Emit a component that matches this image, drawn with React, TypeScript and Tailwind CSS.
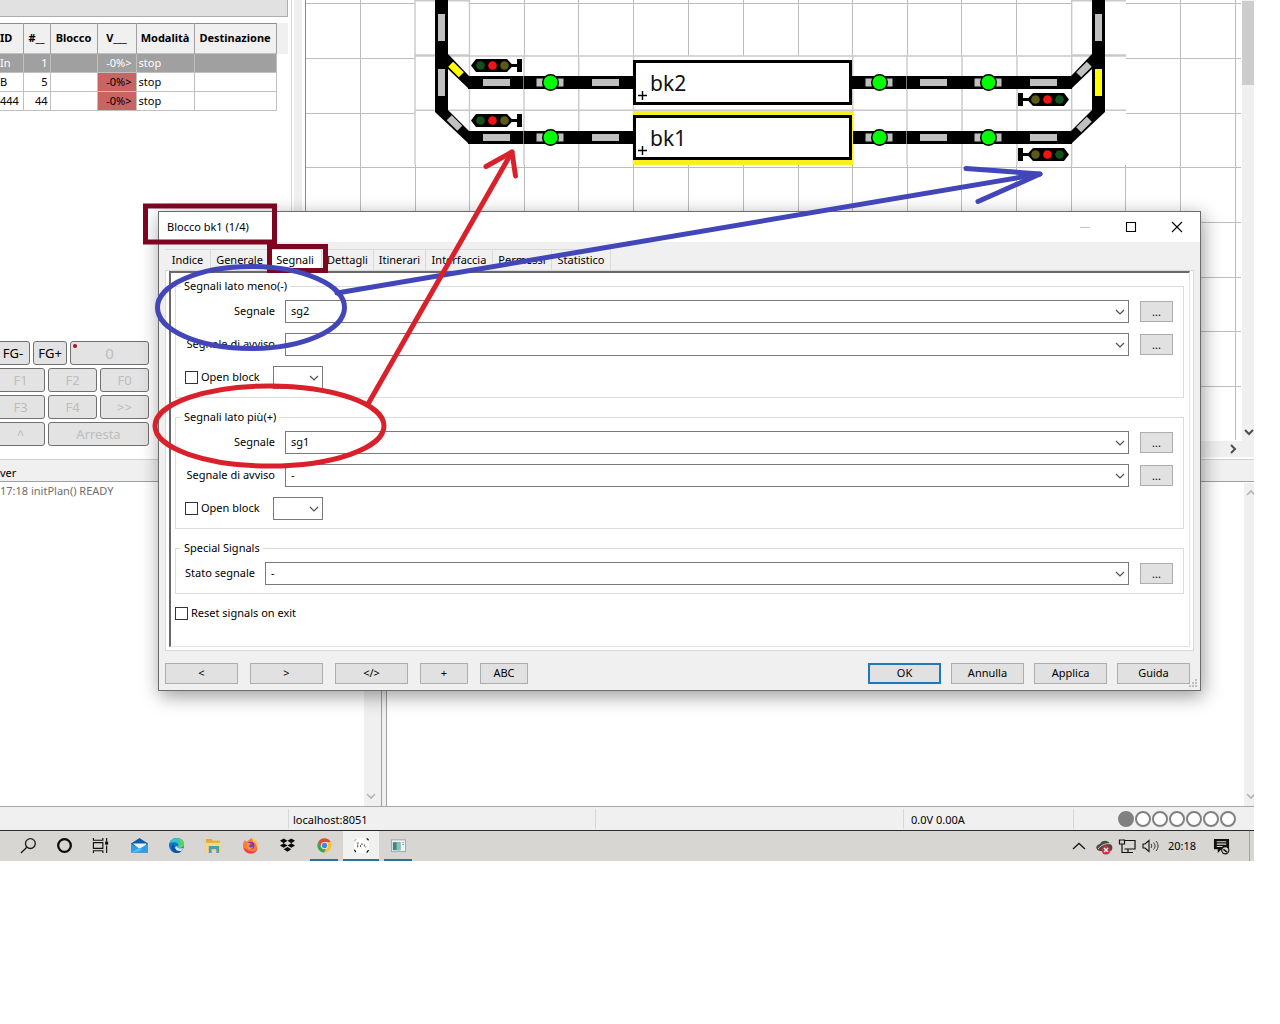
import React from "react";

/* ---------- track plan ---------- */

const GREY = "#c0c0c0";
const GRID_X = [360, 415, 469, 524, 578, 633, 688, 743, 798, 852, 907, 961, 1016, 1071, 1125, 1180, 1235];
const GRID_Y = [3, 58, 113, 167, 222, 277, 331, 386];

function Bar({ x, y, w = 27, h = 7, fill = GREY }: { x: number; y: number; w?: number; h?: number; fill?: string }) {
  return <rect x={x} y={y} width={w} height={h} fill={fill} />;
}

function Sensor({ x, y }: { x: number; y: number }) {
  return (
    <g>
      <rect x={x - 14} y={y - 4} width="27" height="8" fill={GREY} />
      <circle cx={x} cy={y} r="8.5" fill="#000" />
      <circle cx={x} cy={y} r="7" fill="#00ff00" />
    </g>
  );
}

function Signal({ x, y, flip = false }: { x: number; y: number; flip?: boolean }) {
  return (
    <g transform={`translate(${x} ${y})${flip ? " scale(-1 1)" : ""}`}>
      <polygon points="0,6.5 5,0 36,0 42,6.5 36,13 5,13" fill="#000" />
      <rect x="40" y="5" width="8" height="3" fill="#000" />
      <rect x="46" y="0" width="5" height="13" fill="#000" />
      <circle cx="9.5" cy="6.5" r="4.3" fill="#14501a" />
      <circle cx="21.5" cy="6.5" r="4.3" fill="#f01414" />
      <circle cx="33.5" cy="6.5" r="4.3" fill="#5c5a18" />
    </g>
  );
}

function Block({ y, name }: { y: number; name: string }) {
  return (
    <g>
      <rect x="634.5" y={y + 1.5} width="216" height="42" fill="#fff" stroke="#000" strokeWidth="3" />
      <path d={`M638 ${y + 35.5}h9M642.5 ${y + 31}v9`} stroke="#000" strokeWidth="1.4" />
      <text x="650" y={y + 31} fontSize="21" fill="#111">
        {name}
      </text>
    </g>
  );
}

function TrackPlan() {
  return (
    <svg viewBox="306 0 935 440" width="935" height="440" className="block shrink-0" role="img" aria-label="Piano dei binari">
      <rect x="306" y="0" width="935" height="440" fill="#fff" />
      <g stroke="#bdbdbd" strokeWidth="1">
        {GRID_X.map((x) => (
          <path key={x} d={`M${x + 0.5} 0V440`} />
        ))}
        {GRID_Y.map((y) => (
          <path key={y} d={`M306 ${y + 0.5}H1241`} />
        ))}
      </g>
      {/* occupied tiles */}
      <g fill="#fff">
        <rect x="415" y="1" width="54" height="54" />
        <rect x="415" y="56" width="711" height="109" />
        <rect x="1072" y="1" width="54" height="164" />
      </g>
      <g stroke="#c9c9c9" strokeWidth="1.4">
        <path d="M415 .7H470M415 55H470M415 56H1126M415 110.2H1126M1072 .7H1126M1072 55H1126" />
        {[415, 469.5, 524, 578.7, 633.5, 852.7, 907, 962, 1017, 1071.7].map((x) => (
          <path key={x} d={`M${x} 56V165`} />
        ))}
        <path d="M415 0V56M469.5 0V56M1071.7 0V56" />
      </g>
      <g fill="#000">
        <rect x="435" y="0" width="13" height="112" />
        <rect x="1092" y="0" width="13" height="112" />
        <rect x="468" y="76" width="166" height="13" />
        <rect x="468" y="131" width="166" height="13" />
        <rect x="852" y="76" width="220" height="13" />
        <rect x="852" y="131" width="220" height="13" />
        <polygon points="448,54 469,76 469,89 448,69" />
        <polygon points="435,110 448,110 469,131 469,144 435,112" />
        <polygon points="1092,54 1071,76 1071,89 1092,69" />
        <polygon points="1105,110 1092,110 1071,131 1071,144 1105,112" />
      </g>
      <g fill={GREY}>
        <rect x="438" y="14" width="7" height="27" />
        <rect x="438" y="69" width="7" height="27" />
        <rect x="1095" y="14" width="7" height="27" />
        <rect x="1095" y="69" width="7" height="27" fill="#ffff00" />
        <rect x="-7.5" y="-3.5" width="15" height="7" fill="#ffff00" transform="translate(456 69.5) rotate(45)" />
        <rect x="-7.5" y="-3.5" width="15" height="7" transform="translate(454.5 123) rotate(45)" />
        <rect x="-7.5" y="-3.5" width="15" height="7" transform="translate(1084 69.5) rotate(-45)" />
        <rect x="-7.5" y="-3.5" width="15" height="7" transform="translate(1084 124.5) rotate(-45)" />
      </g>
      {[79, 134].map((y) => (
        <g key={y}>
          <Bar x={483} y={y} />
          <Bar x={592} y={y} />
          <Bar x={920} y={y} />
          <Bar x={1030} y={y} />
          <Sensor x={550.5} y={y + 3.5} />
          <Sensor x={879.5} y={y + 3.5} />
          <Sensor x={988.5} y={y + 3.5} />
          <path d={`M523.5 ${y - 3}v13M906.5 ${y - 3}v13`} stroke="#777" strokeWidth="1" />
        </g>
      ))}
      <rect x="633" y="111" width="220" height="54" fill="#f8f020" />
      <Block y={60} name="bk2" />
      <Block y={115} name="bk1" />
      <Signal x={471} y={59} />
      <Signal x={471} y={114} />
      <Signal x={1069} y={93} flip />
      <Signal x={1069} y={148} flip />
    </svg>
  );
}

/* ---------- main window ---------- */

const LOCOS = [
  { id: "In", n: "1", selected: true },
  { id: "B", n: "5", selected: false },
  { id: "444", n: "44", selected: false },
];

function LocoTable() {
  const th = "h-[30px] border-r border-[#a0a0a0] p-0 font-bold whitespace-nowrap";
  return (
    <div className="mt-[6px] flex">
      <table className="w-[276px] table-fixed border-collapse border-t border-[#8c8c8c] text-[11px]">
        <colgroup>
          <col className="w-[23px]" />
          <col className="w-[27px]" />
          <col className="w-[47px]" />
          <col className="w-[39px]" />
          <col className="w-[58px]" />
          <col className="w-[82px]" />
        </colgroup>
        <thead className="bg-[#f0f0f0]">
          <tr>
            <th className={th + " text-left"}>ID</th>
            <th className={th}>#__</th>
            <th className={th}>Blocco</th>
            <th className={th}>V___</th>
            <th className={th}>Modalità</th>
            <th className={th}>Destinazione</th>
          </tr>
        </thead>
        <tbody>
          {LOCOS.map((l) => {
            const td = "h-[19px] border border-l-0 border-[#c0c0c0] p-0 leading-[18px]";
            return (
              <tr key={l.id} className={l.selected ? "bg-[#a0a0a0] text-white" : "bg-white text-black"}>
                <td className={td}>{l.id}</td>
                <td className={td + " pr-[2px] text-right"}>{l.n}</td>
                <td className={td}></td>
                <td className={td + " pr-1 text-right " + (l.selected ? "" : "bg-[#c86464]")}>-0%&gt;</td>
                <td className={td + " pl-[2px]"}>stop</td>
                <td className={td}></td>
              </tr>
            );
          })}
        </tbody>
      </table>
      <div className="h-[31px] flex-1 bg-[#f0f0f0]" />
    </div>
  );
}

function PadKey({ children, className, enabled = false }: { children: React.ReactNode; className: string; enabled?: boolean }) {
  return (
    <button
      disabled={!enabled}
      className={
        "flex h-6 items-center justify-center rounded-[3px] border border-[#707070] bg-[#e3e3e3] text-[13px] leading-none " +
        (enabled ? "text-black " : "text-[#bdbdbd] ") +
        className
      }
    >
      {children}
    </button>
  );
}

function Keypad() {
  return (
    <div className="-ml-1 flex w-[153px] flex-col gap-[3px] pt-[230px]">
      <div className="flex gap-[3px]">
        <PadKey enabled className="w-[34px]">FG-</PadKey>
        <PadKey enabled className="w-[34px]">FG+</PadKey>
        <PadKey className="relative flex-1 text-[15px]">
          <span className="absolute top-[2px] left-[2px] size-1 rounded-full bg-[#b01020]" />0
        </PadKey>
      </div>
      <div className="flex gap-[3px]">
        <PadKey className="flex-1">F1</PadKey>
        <PadKey className="flex-1">F2</PadKey>
        <PadKey className="flex-1">F0</PadKey>
      </div>
      <div className="flex gap-[3px]">
        <PadKey className="flex-1">F3</PadKey>
        <PadKey className="flex-1">F4</PadKey>
        <PadKey className="flex-1">&gt;&gt;</PadKey>
      </div>
      <div className="flex gap-[3px]">
        <PadKey className="w-[49px]">^</PadKey>
        <PadKey className="flex-1">Arresta</PadKey>
      </div>
    </div>
  );
}

function Chevron({ dir = "down", color = "#505050", thick = 1.2 }: { dir?: "down" | "up" | "right"; color?: string; thick?: number }) {
  const d = { down: "M1 3L5 7L9 3", up: "M1 7L5 3L9 7", right: "M3 1L7 5L3 9" }[dir];
  return (
    <svg viewBox="0 0 10 10" className="block size-[10px] shrink-0" aria-hidden="true">
      <path d={d} fill="none" stroke={color} strokeWidth={thick} />
    </svg>
  );
}

function UpperArea() {
  return (
    <div className="flex h-[457px]">
      <div className="w-[291px] shrink-0 overflow-hidden bg-white">
        <div className="h-[17px] w-[288px] border-r border-b border-[#adadad] bg-[#e1e1e1]" />
        <div className="w-[288px]">
          <LocoTable />
        </div>
        <Keypad />
      </div>
      <div className="flex w-[14px] shrink-0 border-l border-[#d9d9d9] bg-white pl-[2px]">
        <div className="w-2 bg-[#f0f0f0]" />
      </div>
      <div className="flex min-w-0 flex-1 flex-col border-l border-[#8c8c8c]">
        <div className="flex min-h-0 flex-1">
          <div className="min-w-0 flex-1 overflow-hidden">
            <TrackPlan />
          </div>
          <div className="flex w-3 shrink-0 flex-col items-end justify-between bg-[#f0f0f0] pt-px pb-1">
            <div className="h-[84px] w-full bg-[#cdcdcd]" />
            <Chevron thick={2} />
          </div>
        </div>
        <div className="flex h-4 shrink-0 items-center justify-end bg-[#f0f0f0] pr-4">
          <Chevron dir="right" thick={2} />
        </div>
      </div>
    </div>
  );
}

function LogPane({ title, text, className, barWidth }: { title: string; text: string; className: string; barWidth: string }) {
  return (
    <section className={"flex flex-col border-t border-[#d0d0d0] " + className}>
      <h2 className="h-[22px] border-b border-[#a0a0a0] bg-[#f0f0f0] pt-[5px] text-[11px] leading-4">{title}</h2>
      <div className="flex flex-1">
        <p className="flex-1 pt-px text-[11px] leading-4 text-[#6d6d6d]">{text}</p>
        <div className={"mt-px flex overflow-hidden bg-[#f0f0f0] py-[5px] " + barWidth}>
          <div className="flex w-[14px] shrink-0 flex-col items-center justify-between">
            <Chevron dir="up" color="#b4b4b4" thick={1.6} />
            <Chevron color="#b4b4b4" thick={1.6} />
          </div>
        </div>
      </div>
    </section>
  );
}

function StatusBar() {
  return (
    <footer className="flex h-[25px] items-center overflow-hidden border-t border-b border-t-[#a8a8a8] border-b-[#2c2c2c] bg-[#f0f0f0] text-[11px]">
      <div className="h-5 w-[289px] shrink-0 border-r border-[#d7d7d7]" />
      <div className="h-5 w-[307px] shrink-0 border-r border-[#d7d7d7] pl-1 leading-[22px]">localhost:8051</div>
      <div className="h-5 flex-1 border-r border-[#d7d7d7]" />
      <div className="h-5 w-[170px] shrink-0 border-r border-[#d7d7d7] pl-[7px] leading-[22px]">0.0V 0.00A</div>
      <div className="flex w-[180px] shrink-0 pl-[44px]">
        {[0, 1, 2, 3, 4, 5, 6].map((i) => (
          <span
            key={i}
            className={"mr-px size-4 shrink-0 rounded-full border-2 border-[#808080] " + (i === 0 ? "bg-[#808080]" : "bg-white")}
          />
        ))}
      </div>
    </footer>
  );
}

/* ---------- taskbar ---------- */

const TASKS: { name: string; w: string; state?: string; icon: React.ReactNode }[] = [
  {
    name: "Cerca",
    w: "w-9",
    icon: (
      <g fill="none" stroke="#1a1a1a" strokeWidth="1.4">
        <circle cx="11" cy="7" r="5.2" />
        <path d="M7.2 10.8L1 17" />
      </g>
    ),
  },
  { name: "Cortana", w: "w-9", icon: <circle cx="9" cy="9" r="6.700" fill="none" stroke="#0c0c0c" strokeWidth="2.4" /> },
  {
    name: "Visualizzazione attività",
    w: "w-9",
    icon: (
      <g fill="none" stroke="#111" strokeWidth="1.200">
        <path d="M1.500 1v2.500H11.500V1M1.500 6H11.500V12H1.500ZM1.500 17v-2.500H11.500V17M15.500 1v4M15.500 9v8" />
        <rect x="14.500" y="5.500" width="2" height="2" fill="#111" />
      </g>
    ),
  },
  {
    name: "Posta",
    w: "w-[42px]",
    icon: (
      <g>
        <path d="M0 7L9 1L18 7V16.500H0Z" fill="#0f5da8" />
        <path d="M2 7H16V11L9 13Z" fill="#e9f3fb" />
        <path d="M0 7L9 12.500L18 7V16.500H0Z" fill="#2f9fe4" />
        <path d="M0 16.500L9 11.500L12 13.500L4 16.500Z" fill="#55bdf2" />
      </g>
    ),
  },
  {
    name: "Edge",
    w: "w-8",
    icon: (
      <g>
        <circle cx="9" cy="9" r="8" fill="#1476c8" />
        <path d="M1.500 7C3 2 7 1 10 1c4 0 7 3 7 6.500 0 3-2.500 4-5 4-1.500 0-2.200-.5-1.500-1.500C12 7.500 9.500 5.500 7 5.500 4.500 5.500 2.500 6 1.500 7Z" fill="#35c2c9" />
        <path d="M11 1.200c4 .5 6 3.300 6 6.300 0 3-2.500 4-5 4-1 0-1.700-.3-1.500-1 3-2 3-6.500.5-9.300Z" fill="#5fd364" />
        <path d="M6.500 9.500c0 4 3.500 6 8 5-2 2.500-6 3.300-8.500 1.500C2.500 13.500 3 9.500 6 7.500Z" fill="#0f529f" />
        <path d="M10 9.500c-1 2 2 3.500 6 2l-1.500 3c-4 1-7-1-7-4Z" fill="#d7e9f2" />
      </g>
    ),
  },
  {
    name: "Esplora file",
    w: "w-[42px]",
    icon: (
      <g>
        <path d="M1 2h6l1.500 2H16v12H1Z" fill="#e0a93a" />
        <path d="M1 6h16v10H1Z" fill="#fcd977" />
        <path d="M4 9.500h11V17h-3v-4H7v4H4Z" fill="#4f9bb8" />
      </g>
    ),
  },
  {
    name: "Firefox",
    w: "w-8",
    icon: (
      <g>
        <path d="M3 3.500L5 5l5-4c3 1.500 7 4 7 8.500A8 8 0 1 1 1 9.500C1 7 1.700 5 3 3.500Z" fill="#ff7a2a" />
        <path d="M10 1c3 1.500 7 4 7 8.500 0 1.500-.5 3-1 4 0-4-1-7-4-8.500Z" fill="#ffce3d" />
        <path d="M1.500 11c1.500 5 5 6.500 8 6.500 3 0 5.500-1.500 6.500-4-3 2-6 2.500-9 1Z" fill="#f13a55" />
        <circle cx="9.200" cy="9" r="4" fill="#7b3fc0" />
        <path d="M5 7c1.500-1 3.500-.5 4.500.5L7 9.500c1 2 3.500 2 5 .5-1 3-5 4-7 1.500Z" fill="#ff9a38" />
      </g>
    ),
  },
  {
    name: "Dropbox",
    w: "w-[42px]",
    icon: (
      <path
        d="M5 1.500L9 4 5 6.500 1 4ZM13 1.500L17 4 13 6.500 9 4ZM5 6.500L9 9 5 11.500 1 9ZM13 6.500L17 9 13 11.500 9 9ZM9 10.500L13 13 9 15.500 5 13Z"
        fill="#0a0a0a"
      />
    ),
  },
  {
    name: "Chrome",
    w: "w-7",
    state: "open",
    icon: (
      <g>
        <circle cx="9" cy="9" r="7.500" fill="#f4c430" />
        <path d="M2.500 5.200A7.500 7.500 0 0 1 15.500 5.200H9A4 4 0 0 0 5.500 10.500Z" fill="#e04a3a" />
        <path d="M2.500 5.200L6 11.500A4 4 0 0 0 10.500 12.500L8.500 16.500A7.500 7.500 0 0 1 2.500 5.200Z" fill="#37a456" />
        <circle cx="9" cy="9" r="3.800" fill="#f2f2f2" />
        <circle cx="9" cy="9" r="2.900" fill="#4385e0" />
      </g>
    ),
  },
  {
    name: "Rocrail",
    w: "w-9",
    state: "active",
    icon: (
      <g>
        <rect x="1" y="1" width="16" height="16" rx="4" fill="#fff" />
        <path d="M14.500 1.500L16.500 3.500M1.500 13.500L3 16M16.500 14L14.500 16.500" stroke="#111" strokeWidth="1.300" fill="none" />
        <path d="M1.500 4.500L3.500 2" stroke="#888" strokeWidth="1" fill="none" />
        <path d="M4 6.500h2M5 8v3M8 8.500v2M8.500 7.500h2M12 8v2M13.500 10v1" stroke="#444" strokeWidth="1" fill="none" />
      </g>
    ),
  },
  {
    name: "Rocview",
    w: "w-7",
    state: "open",
    icon: (
      <g>
        <rect x="1.500" y="3" width="15" height="12.500" fill="#eef3f3" stroke="#9aa5a8" />
        <rect x="3" y="5.500" width="8" height="8.500" fill="#3f8583" />
        <rect x="7" y="5.500" width="4" height="8.500" fill="#8fbdb6" />
        <path d="M13 6h2M13 8h2" stroke="#7ca3a8" />
      </g>
    ),
  },
];

function Taskbar() {
  return (
    <nav aria-label="Barra delle applicazioni" className="flex h-[30px] items-stretch bg-[#d7d6d3]">
      <div className="flex items-stretch pl-[10px]">
        {TASKS.map((t) => (
          <button
            key={t.name}
            aria-label={t.name}
            className={
              "flex items-center justify-center border-b-2 " +
              t.w +
              (t.state === "active"
                ? " mx-[5px] border-[#2c7199] bg-[#f1f1f0]"
                : t.state === "open"
                  ? " border-[#2c7199]"
                  : " border-transparent") +
              (t.name === "Chrome" ? " ml-[2px]" : "")
            }
          >
            <svg viewBox="0 0 18 18" className="size-[17px]" aria-hidden="true">
              {t.icon}
            </svg>
          </button>
        ))}
      </div>
      <div className="ml-auto flex items-center text-[11px]">
        <svg viewBox="0 0 90 20" className="h-5 w-[90px]" fill="none" aria-hidden="true">
          <path d="M3 13L9 7.500L15 13" stroke="#1a1a1a" strokeWidth="1.3" />
          <path d="M30 15c-5-1-5-6 0-7 2-4.500 8-4 10 0 3 1 3 5 1 7Z" fill="#4a4a4a" />
          <path d="M28 13c4-5 9-6 14-5" stroke="#cfcfcf" strokeWidth="1" />
          <circle cx="36" cy="14" r="4.500" fill="#cf2c3c" />
          <path d="M34 12l4 4M38 12l-4 4" stroke="#fff" strokeWidth="1.300" />
          <path d="M54 4.500h11v8.500H54.500M58 13v3.500M55 16.500h8" stroke="#111" strokeWidth="1.200" />
          <path d="M49.500 4h5v4h-5ZM52 8v8.500h3" stroke="#111" strokeWidth="1.200" />
          <path d="M73 8h2l4-3.500v11L75 12h-2Z" stroke="#111" strokeWidth="1.100" />
          <path d="M81 8c1 1.500 1 2.500 0 4M83.500 6.500c2 2.500 2 4.500 0 7M86 5c2.700 3.300 2.700 6.700 0 10" stroke="#333" strokeWidth="1" />
        </svg>
        <time className="ml-2 w-7 whitespace-nowrap">20:18</time>
        <svg viewBox="0 0 18 18" className="mr-[19px] ml-[17px] size-[17px]" aria-hidden="true">
          <path d="M1 1h16v11H9l-4 4v-4H1Z" fill="#101010" />
          <path d="M4 4h10M4 6.500h10M4 9h6" stroke="#d7d6d3" strokeWidth="1.200" />
          <circle cx="13" cy="13" r="3.800" fill="#d7d6d3" stroke="#101010" strokeWidth="1.200" />
          <path d="M11 12l4 3" stroke="#101010" strokeWidth="1.500" />
        </svg>
        <div className="h-full w-[5px] border-l border-[#a5a5a5]" />
      </div>
    </nav>
  );
}

/* ---------- dialog ---------- */

function Combo({ id, value, label, className }: { id: string; value: string; label?: string; className: string }) {
  return (
    <div className={"grid " + className}>
      <select
        id={id}
        aria-label={label}
        defaultValue={value}
        className="col-start-1 row-start-1 h-[23px] w-full appearance-none rounded-none border border-[#7a7a7a] bg-white pb-px pl-[5px] text-[11px] leading-4"
      >
        <option value={value}>{value}</option>
      </select>
      <span className="pointer-events-none col-start-1 row-start-1 mr-1 self-center justify-self-end">
        <Chevron />
      </span>
    </div>
  );
}

function Row({ id, label, value, labelWidth }: { id: string; label: string; value: string; labelWidth: string }) {
  return (
    <div className="flex items-center">
      <label htmlFor={id} className={"mr-[10px] text-right whitespace-nowrap " + labelWidth}>
        {label}
      </label>
      <Combo id={id} value={value} className="flex-1" />
      <button aria-label={label + " ..."} className="ml-[11px] h-[21px] w-[33px] border border-[#adadad] bg-[#e1e1e1] leading-4">
        ...
      </button>
    </div>
  );
}

function Check({ id, label }: { id: string; label: string }) {
  return (
    <div className="flex items-center">
      <input id={id} type="checkbox" className="size-[13px] appearance-none border border-[#333] bg-white checked:bg-[#333]" />
      <label htmlFor={id} className="ml-[3px]">
        {label}
      </label>
    </div>
  );
}

function SignalGroup({ id, title, main, warn }: { id: string; title: string; main: string; warn: string }) {
  return (
    <fieldset className="border border-[#dcdcdc] pr-[10px] pb-[8px] pl-[9px]">
      <legend className="-ml-1 px-[3px] leading-4">{title}</legend>
      <div className="flex flex-col gap-[10px] pt-[6px]">
        <Row id={id + "-main"} label="Segnale" value={main} labelWidth="w-[90px]" />
        <Row id={id + "-warn"} label="Segnale di avviso" value={warn} labelWidth="w-[90px]" />
        <div className="flex items-center">
          <div className="w-[88px]">
            <Check id={id + "-open"} label="Open block" />
          </div>
          <Combo id={id + "-sel"} label="Open block" value="" className="w-[50px]" />
        </div>
      </div>
    </fieldset>
  );
}

const TABS = [
  { name: "Indice", w: "w-[46px]" },
  { name: "Generale", w: "w-[58px]" },
  { name: "Segnali", w: "w-[53px]" },
  { name: "Dettagli", w: "w-[52px]" },
  { name: "Itinerari", w: "w-[52px]" },
  { name: "Interfaccia", w: "w-[67px]" },
  { name: "Permessi", w: "w-[59px]" },
  { name: "Statistico", w: "w-[59px]" },
];

const btn = "h-[21px] bg-[#e1e1e1] leading-4 ";

function BlockDialog() {
  return (
    <div
      role="dialog"
      aria-label="Blocco bk1 (1/4)"
      className="absolute top-[211px] right-[79px] left-[158px] border border-[#6b6b6b] bg-[#f0f0f0] text-[11px] shadow-[2px_5px_18px_rgba(0,0,0,0.4)]"
    >
      <header className="flex h-[30px] items-center bg-white pr-[17px] pl-2">
        <h1 className="flex-1">Blocco bk1 (1/4)</h1>
        <div className="flex gap-[34px]">
          {[
            { n: "Riduci a icona", d: "M1 6.500H11", c: "#c4c4c4" },
            { n: "Ingrandisci", d: "M1.500 1.500H10.500V10.500H1.500Z", c: "#000" },
            { n: "Chiudi", d: "M1 1L11 11M11 1L1 11", c: "#000" },
          ].map((b) => (
            <button key={b.n} aria-label={b.n}>
              <svg viewBox="0 0 12 12" className="block size-3" aria-hidden="true">
                <path d={b.d} fill="none" stroke={b.c} strokeWidth="1.100" />
              </svg>
            </button>
          ))}
        </div>
      </header>
      <div className="px-[6px] pt-[7px]">
        <div role="tablist" className="flex">
          {TABS.map((t) => (
            <button
              key={t.name}
              role="tab"
              aria-selected={t.name === "Segnali"}
              className={
                "h-[21px] border-t border-r border-[#dadada] text-center leading-5 " +
                t.w +
                (t.name === "Segnali" ? " bg-white pb-1 leading-4" : "")
              }
            >
              {t.name}
            </button>
          ))}
        </div>
        <div role="tabpanel" className="border border-[#dadada] bg-white px-[3px] pb-[3px]">
          <div className="border border-t-2 border-l-2 border-t-[#696969] border-r-[#e3e3e3] border-b-[#e3e3e3] border-l-[#696969] pt-[5px] pr-[5px] pb-6 pl-1">
            <SignalGroup id="minus" title="Segnali lato meno(-)" main="sg2" warn="" />
            <div className="mt-[11px]">
              <SignalGroup id="plus" title="Segnali lato più(+)" main="sg1" warn="-" />
            </div>
            <fieldset className="mt-[11px] border border-[#dcdcdc] pr-[10px] pb-[8px] pl-[9px]">
              <legend className="-ml-1 px-[3px] leading-4">Special Signals</legend>
              <div className="pt-[6px]">
                <Row id="state" label="Stato segnale" value="-" labelWidth="w-[70px]" />
              </div>
            </fieldset>
            <div className="mt-[11px]">
              <Check id="reset" label="Reset signals on exit" />
            </div>
          </div>
        </div>
      </div>
      <div className="flex px-[6px] pt-3 pb-[6px]">
        <div className="flex gap-3">
          <button className={btn + "w-[73px] border border-[#adadad]"}>&lt;</button>
          <button className={btn + "w-[73px] border border-[#adadad]"}>&gt;</button>
          <button className={btn + "w-[73px] border border-[#adadad]"}>&lt;/&gt;</button>
          <button className={btn + "w-12 border border-[#adadad]"}>+</button>
          <button className={btn + "w-12 border border-[#adadad]"}>ABC</button>
        </div>
        <div className="mr-1 ml-auto flex gap-[10px]">
          <button className={btn + "w-[73px] border-2 border-[#2078b8]"}>OK</button>
          <button className={btn + "w-[73px] border border-[#adadad]"}>Annulla</button>
          <button className={btn + "w-[73px] border border-[#adadad]"}>Applica</button>
          <button className={btn + "w-[73px] border border-[#adadad]"}>Guida</button>
        </div>
      </div>
      <svg viewBox="0 0 9 9" className="absolute right-[2px] bottom-[2px] size-[9px]" fill="#bfbfbf" aria-hidden="true">
        <path d="M6 0h2v2H6ZM6 3h2v2H6ZM3 3h2v2H3ZM6 6h2v2H6ZM3 6h2v2H3ZM0 6h2v2H0Z" />
      </svg>
    </div>
  );
}

/* hand-drawn marks over the windows */
function Annotations() {
  return (
    <svg viewBox="0 0 1254 861" width="1254" height="861" className="pointer-events-none absolute top-0 left-0" fill="none" aria-hidden="true">
      <g stroke="#7c0620" strokeWidth="5">
        <rect x="145.500" y="206" width="129" height="36" />
        <rect x="269.500" y="246.500" width="56" height="24" />
      </g>
      <g stroke="#4246b9" strokeWidth="5" strokeLinecap="round">
        <ellipse cx="251" cy="307.500" rx="93.500" ry="41" />
        <path d="M337 293L1040 174" />
        <path d="M966 168.500L1040 174L978 201.500" strokeLinejoin="round" />
      </g>
      <g stroke="#da202b" strokeWidth="5" strokeLinecap="round">
        <ellipse cx="269.500" cy="426" rx="114.500" ry="40" />
        <path d="M368 404L512 152" />
        <path d="M486 166.500L512 152L515.500 176" strokeLinejoin="round" />
      </g>
    </svg>
  );
}

export default function App() {
  return (
    <div className="relative overflow-hidden bg-white pr-[26px] text-black [font-family:'Noto_Sans','Open_Sans',sans-serif]">
      <main>
        <UpperArea />
        <div className="flex h-[349px] pt-[2px]">
          <LogPane title="ver" text="17:18 initPlan() READY" className="w-[382px] shrink-0 border-r border-r-[#a0a0a0]" barWidth="w-[17px]" />
          <div className="w-1 shrink-0 bg-[#f0f0f0]" />
          <LogPane title="" text="" className="min-w-0 flex-1 border-l border-l-[#a0a0a0]" barWidth="w-[10px]" />
        </div>
        <StatusBar />
      </main>
      <Taskbar />
      <BlockDialog />
      <Annotations />
    </div>
  );
}
